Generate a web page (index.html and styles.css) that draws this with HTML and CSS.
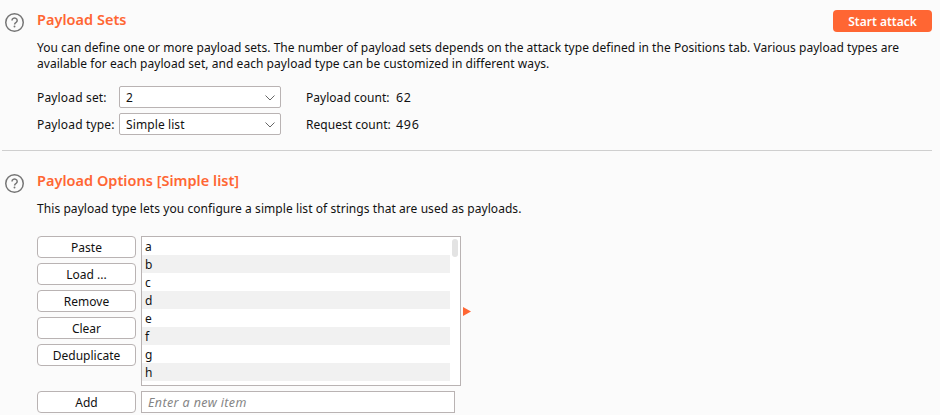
FILE: index.html
```
<!DOCTYPE html>
<html lang="en">
<head>
<meta charset="utf-8">
<title>Payloads</title>
<link rel="stylesheet" href="styles.css">
</head>
<body>
<main class="page">
  <section class="sets">
    <svg class="help" viewBox="0 0 19 19"><circle cx="9.5" cy="9.5" r="8.75"/><path d="M7 7.4a2.6 2.4 0 1 1 4.100 2Q9.600 10.300 9.600 11.500"/><circle class="dot" cx="9.500" cy="13.500" r=".95"/></svg>
    <div class="content">
      <header class="heading"><h2>Payload Sets</h2><button class="attack">Start attack</button></header>
      <p class="desc"><span class="line-one">You can define one or more payload sets. The number of payload sets depends on the attack type defined in the Positions tab. Various payload types are</span><br><span class="line-two">available for each payload set, and each payload type can be customized in different ways.</span></p>
      <div class="form">
        <label>Payload set:</label>
        <div class="select">2<svg viewBox="0 0 12 8"><path d="M1.5 1.5 6 6 10.500 1.5"/></svg></div>
        <span class="count">Payload count:</span><span class="number">62</span>
        <label>Payload type:</label>
        <div class="select">Simple list<svg viewBox="0 0 12 8"><path d="M1.5 1.5 6 6 10.500 1.5"/></svg></div>
        <span class="count">Request count:</span><span class="number">496</span>
      </div>
    </div>
  </section>
  <section class="options">
    <svg class="help" viewBox="0 0 19 19"><circle cx="9.5" cy="9.5" r="8.75"/><path d="M7 7.4a2.6 2.4 0 1 1 4.100 2Q9.600 10.300 9.600 11.500"/><circle class="dot" cx="9.500" cy="13.500" r=".95"/></svg>
    <div class="content">
      <h2>Payload Options [Simple list]</h2>
      <p class="desc">This payload type lets you configure a simple list of strings that are used as payloads.</p>
      <div class="editor">
        <div class="buttons"><button>Paste</button><button>Load ...</button><button>Remove</button><button>Clear</button><button>Deduplicate</button></div>
        <div class="list">
          <ul><li>a</li><li>b</li><li>c</li><li>d</li><li>e</li><li>f</li><li>g</li><li>h</li></ul>
          <div class="track"><div class="thumb"></div></div>
        </div>
        <svg class="arrow" viewBox="0 0 8 9"><path d="M0 0 8 4.500 0 9Z"/></svg>
      </div>
      <div class="add"><button>Add</button><div class="input">Enter a new item</div></div>
    </div>
  </section>
</main>
</body>
</html>
```
FILE: styles.css
```
* { box-sizing: border-box; }
body { margin: 0; background: #fbfbfb; color: #111; font: 12px/16px "Noto Sans", sans-serif; overflow: hidden; }
.page { height: 415px; overflow: hidden; }
section { display: flex; margin: 0 8px 0 2px; }
.sets { height: 151px; padding-top: 10px; border-bottom: 1px solid #cfcfcf; }
.options { padding-top: 20px; }
.help { width: 19px; height: 19px; margin: 3px 13px 0 3px; flex: none; fill: none; stroke: #757575; stroke-width: 1.5; }
.help .dot { fill: #757575; stroke: none; }
.content { flex: 1; }
.heading { display: flex; justify-content: space-between; height: 22px; }
h2 { height: 20px; margin: 0; font: 600 14.5px/18px "Noto Sans", sans-serif; letter-spacing: .02px; color: #ff6633; }
button { font: inherit; color: #111; padding: 1px 0 0; width: 99px; height: 22px; background: #fff; border: 1px solid #b9b3b3; border-radius: 4px; }
.attack { background: #ff6633; border: 0; border-radius: 4px; color: #fff; font-weight: 600; }
.desc { margin: 8px 0 0; white-space: nowrap; }
.options .desc { margin-top: 10px; letter-spacing: .067px; }
.line-one { letter-spacing: .03px; }
.line-two { letter-spacing: .05px; }
.form { display: grid; grid-template-columns: 82px 162px 115px auto; grid-auto-rows: 22px; row-gap: 5px; margin-top: 14px; line-height: 22px; letter-spacing: .16px; white-space: nowrap; }
.form > label, .form > span { padding-top: 1px; }
.select { display: flex; align-items: center; justify-content: space-between; height: 22px; padding: 1px 4px 0 6px; background: #fff; border: 1px solid #b9b3b3; border-radius: 2px; letter-spacing: .1px; }
.select svg { width: 12px; height: 8px; fill: none; stroke: #666; }
.count { padding-left: 25px; letter-spacing: .03px; }
.form > .number { font-size: 12.5px; letter-spacing: .7px; }
.editor { display: flex; margin-top: 19px; height: 150px; }
.buttons { display: flex; flex-direction: column; gap: 5px; margin-right: 5px; }
.list { display: flex; width: 320px; background: #fff; border: 1px solid #b9b3b3; }
ul { list-style: none; margin: 0; padding: 0; width: 308px; }
li { height: 18px; line-height: 20px; padding-left: 3px; }
li:nth-child(even) { background: #f1f1f1; }
.track { flex: 1; padding: 2px; }
.thumb { height: 18px; border-radius: 3px; background: #e3e3e3; }
.arrow { width: 8px; height: 9px; margin: 71px 0 0 2px; fill: #ff6633; }
.add { display: flex; gap: 5px; margin-top: 5px; }
.input { width: 314px; height: 22px; padding: 3px 6px; background: #fff; border: 1px solid #b9b3b3; font-size: 12.5px; font-style: italic; letter-spacing: .38px; color: #858585; }
```
